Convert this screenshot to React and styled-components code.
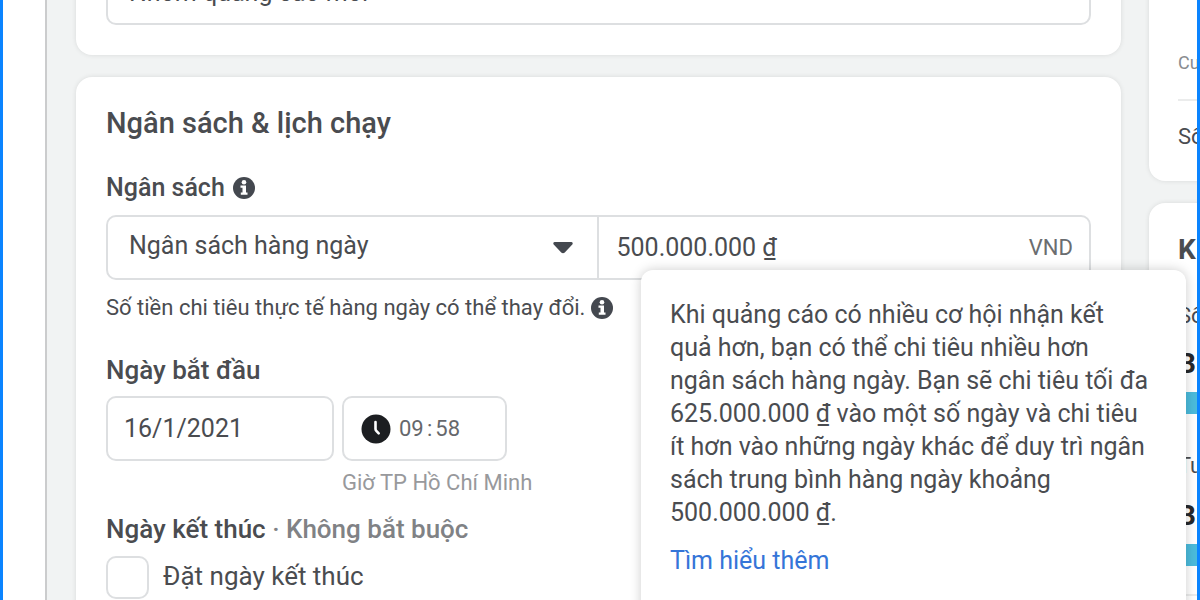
import React from 'react';
import styled, { createGlobalStyle } from 'styled-components';

const Global = createGlobalStyle`
  * { box-sizing: border-box; }
  body { margin: 0; background: #f1f3f3; font-family: Roboto, "Noto Sans", sans-serif; font-size: 25px; color: #4a4c50; }
  input, select { font: inherit; color: inherit; }
`;

const Frame = styled.div`
  display: flex;
  height: 100vh;
  overflow: hidden;
  border: solid #0a84ff;
  border-width: 0 3px;
`;

const Rail = styled.nav`
  flex: 0 0 44px;
  background: #fff;
  border-right: 2px solid #cbcccd;
`;

const Content = styled.div`
  flex: 1;
  min-width: 0;
  display: flex;
  gap: 28px;
  padding-left: 29px;
`;

const MainColumn = styled.main`
  flex: 1;
  min-width: 0;
  display: flex;
  flex-direction: column;
  gap: 22px;
  margin-top: -70px;
`;

const SideColumn = styled.aside`
  flex: 0 0 48px;
  display: flex;
  flex-direction: column;
  gap: 22px;
  margin-top: -20px;
`;

const Card = styled.section`
  background: #fff;
  border-radius: 16px;
  padding: 30px;
  box-shadow: 0 0 5px rgba(0, 0, 0, 0.1);
`;

const SideCard = styled(Card)`
  padding: 30px 0 30px 29px;
  margin-right: -40px;
  white-space: nowrap;
`;

const TextBox = styled.input`
  display: block;
  width: ${(p) => p.$width || '100%'};
  height: 65px;
  padding: 0 ${(p) => p.$inset || 16}px;
  border: 2px solid #dddfe1;
  border-radius: 10px;
  background: #fff;
`;

const Title = styled.h2`
  margin: 0;
  font-size: 29px;
  line-height: 32px;
  font-weight: 500;
`;

const Label = styled.label`
  display: flex;
  align-items: center;
  gap: 8px;
  margin-top: ${(p) => p.$top || 0}px;
  font-size: ${(p) => p.$size || 26}px;
  line-height: 32px;
  font-weight: 500;
`;

const Optional = styled.span`
  color: #808285;
`;

const BudgetRow = styled.div`
  position: relative;
  display: flex;
  margin-top: 11px;
  height: 65px;
  border: 2px solid #dddfe1;
  border-radius: 10px;
`;

const SelectWrap = styled.div`
  flex: 0 0 50%;
  display: grid;
  align-items: center;
  border-right: 2px solid #dddfe1;
  > * { grid-area: 1 / 1; }
  > svg { justify-self: end; margin-right: 24px; pointer-events: none; }
`;

const Select = styled.select`
  appearance: none;
  width: 100%;
  height: 100%;
  border: 0;
  padding: 0 21px 4px;
  background: none;
`;

const AmountWrap = styled.div`
  flex: 1;
  min-width: 0;
  display: flex;
  align-items: center;
  padding: 0 16px 0 18px;
`;

const Amount = styled.input`
  flex: 1;
  min-width: 0;
  border: 0;
  padding: 0;
  background: none;
`;

const Currency = styled.span`
  font-size: 22px;
  color: #6b6d70;
`;

const Hint = styled.p`
  display: flex;
  align-items: center;
  gap: 6px;
  margin: 15px 0 0;
  font-size: 22px;
  line-height: 26px;
`;

const DateRow = styled.div`
  display: flex;
  gap: 8px;
  margin-top: 10px;
`;

const TimeBox = styled.div`
  display: flex;
  align-items: center;
  width: 165px;
  height: 65px;
  padding: 0 17px;
  border: 2px solid #dddfe1;
  border-radius: 10px;
  color: #66686c;
  font-size: 22px;
  > svg { margin-right: 8px; }
`;

const TimePart = styled.input`
  width: 25px;
  border: 0;
  padding: 0;
  background: none;
`;

const Colon = styled.span`
  padding: 0 3px;
`;

const Zone = styled.p`
  margin: 9px 0 0;
  font-size: 22px;
  line-height: 26px;
  color: #98999c;
`;

const CheckRow = styled.label`
  display: flex;
  gap: 14px;
  margin-top: 11px;
  font-size: 26px;
  line-height: 40px;
`;

const Check = styled.input`
  appearance: none;
  width: 43px;
  height: 43px;
  margin: 0;
  border: 2px solid #dddfe1;
  border-radius: 10px;
`;

const Tooltip = styled.div`
  position: absolute;
  top: 53px;
  right: -97px;
  z-index: 2;
  width: 545px;
  min-height: 370px;
  padding: 28px 29px;
  border-radius: 12px;
  background: #fff;
  box-shadow: 0 0 12px rgba(0, 0, 0, 0.2);
  line-height: 33px;
  p { margin: 0 0 15px; }
`;

const Link = styled.a`
  color: #3575d8;
  text-decoration: none;
`;

const SideText = styled.p`
  margin: ${(p) => p.$top || 0}px 0 0;
  font-size: ${(p) => p.$size || 22}px;
  line-height: 28px;
  font-weight: ${(p) => (p.$bold ? 700 : 400)};
  color: ${(p) => p.$color || '#4a4c50'};
`;

const Rule = styled.hr`
  margin: ${(p) => p.$gap || 22}px 0;
  border: 0;
  border-top: 2px solid #ebecec;
`;

const Bar = styled.div`
  height: 22px;
  margin-top: 14px;
  background: #4bbbdc;
`;

const Info = () => (
  <svg width="22" height="22" viewBox="0 0 22 22" aria-hidden="true">
    <circle cx="11" cy="11" r="11" fill="#44484f" />
    <circle cx="11" cy="5.3" r="2.3" fill="#fff" />
    <path d="M7.5 8.5h5.5v7H14.5v2.3H7.8v-2.3h1.7v-4.7H7.5z" fill="#fff" />
  </svg>
);

export default function App() {
  return (
    <>
      <Global />
      <Frame>
        <Rail />
        <Content>
          <MainColumn>
            <Card>
              <TextBox $inset={21} aria-label="Tên nhóm quảng cáo" defaultValue="Nhóm quảng cáo mới" />
            </Card>
            <Card>
              <Title>Ngân sách &amp; lịch chạy</Title>
              <Label htmlFor="budget-type" $top={33} $size={25}>
                Ngân sách <Info />
              </Label>
              <BudgetRow>
                <SelectWrap>
                  <Select id="budget-type">
                    <option>Ngân sách hàng ngày</option>
                  </Select>
                  <svg width="20" height="12" viewBox="0 0 20 12" aria-hidden="true">
                    <path d="M1.5 0h17q2 .6.8 2.4L11.8 10.6Q10 12 8.2 10.6L.7 2.4Q-.5.6 1.5 0z" fill="#44484f" />
                  </svg>
                </SelectWrap>
                <AmountWrap>
                  <Amount aria-label="Số tiền" defaultValue="500.000.000 ₫" />
                  <Currency>VND</Currency>
                </AmountWrap>
                <Tooltip role="tooltip">
                  <p>
                    Khi quảng cáo có nhiều cơ hội nhận kết<br />
                    quả hơn, bạn có thể chi tiêu nhiều hơn<br />
                    ngân sách hàng ngày. Bạn sẽ chi tiêu tối đa<br />
                    625.000.000 ₫ vào một số ngày và chi tiêu<br />
                    ít hơn vào những ngày khác để duy trì ngân<br />
                    sách trung bình hàng ngày khoảng<br />
                    500.000.000 ₫.
                  </p>
                  <Link href="#">Tìm hiểu thêm</Link>
                </Tooltip>
              </BudgetRow>
              <Hint>
                Số tiền chi tiêu thực tế hàng ngày có thể thay đổi. <Info />
              </Hint>
              <Label htmlFor="start-date" $top={33}>Ngày bắt đầu</Label>
              <DateRow>
                <TextBox id="start-date" $width="228px" defaultValue="16/1/2021" />
                <div>
                  <TimeBox>
                    <svg width="30" height="30" viewBox="0 0 30 30" aria-hidden="true">
                      <circle cx="15" cy="15" r="14.5" fill="#1c1e21" />
                      <path d="M14.5 8v7q0 1 .8 1.8l2.4 2.6" fill="none" stroke="#fff" strokeWidth="2.6" strokeLinecap="round" />
                    </svg>
                    <TimePart aria-label="Giờ" defaultValue="09" />
                    <Colon>:</Colon>
                    <TimePart aria-label="Phút" defaultValue="58" />
                  </TimeBox>
                  <Zone>Giờ TP Hồ Chí Minh</Zone>
                </div>
              </DateRow>
              <Label as="div" $top={17}>
                <span>Ngày kết thúc <Optional>· Không bắt buộc</Optional></span>
              </Label>
              <CheckRow>
                <Check type="checkbox" />
                Đặt ngày kết thúc
              </CheckRow>
            </Card>
          </MainColumn>
          <SideColumn>
            <SideCard>
              <SideText $top={39} $size={18} $color="#8a8c8f">Cu</SideText>
              <Rule />
              <SideText>Số</SideText>
            </SideCard>
            <SideCard>
              <SideText $top={3} $size={28} $bold>K</SideText>
              <SideText $top={38}>Số</SideText>
              <SideText $top={20} $size={28} $bold $color="#26282b">B</SideText>
              <Bar />
              <SideText $top={38}>Tu</SideText>
              <SideText $top={22} $size={28} $bold $color="#26282b">B</SideText>
              <Bar />
              <Rule $gap={28} />
            </SideCard>
          </SideColumn>
        </Content>
      </Frame>
    </>
  );
}
